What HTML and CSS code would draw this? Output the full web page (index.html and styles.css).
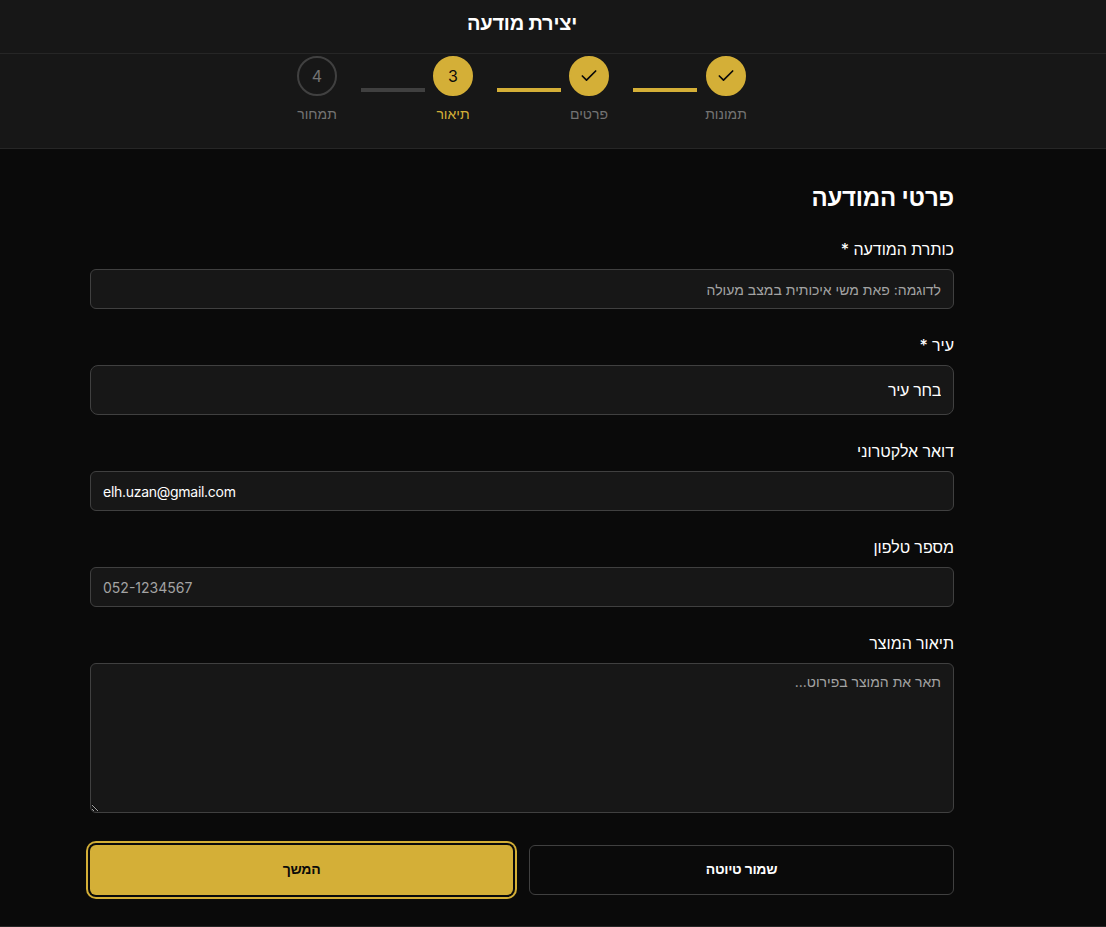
FILE: index.html
```html
<!DOCTYPE html>
<html lang="he" dir="rtl">
<head>
    <meta charset="UTF-8">
    <meta name="viewport" content="width=device-width, initial-scale=1.0">
    <title>יצירת מודעה</title>
    <link rel="stylesheet" href="styles.css">
</head>
<body>
    <div class="wrapper">
        <header class="header">
            <h1 class="header-title">יצירת מודעה</h1>
        </header>
        <nav class="steps">
            <div class="step _done">
                <div class="step-circle">
                    <svg class="step-icon" viewBox="0 0 24 24"><path d="M20 6 9 17l-5-5"/></svg>
                </div>
                <div class="step-label">תמונות</div>
            </div>
            <div class="step-line _done _first"></div>
            <div class="step _done">
                <div class="step-circle">
                    <svg class="step-icon" viewBox="0 0 24 24"><path d="M20 6 9 17l-5-5"/></svg>
                </div>
                <div class="step-label">פרטים</div>
            </div>
            <div class="step-line _done"></div>
            <div class="step _active">
                <div class="step-circle">3</div>
                <div class="step-label">תיאור</div>
            </div>
            <div class="step-line"></div>
            <div class="step">
                <div class="step-circle">4</div>
                <div class="step-label">תמחור</div>
            </div>
        </nav>
        <main class="main">
            <form class="form" action="#">
                <h2 class="form-title">פרטי המודעה</h2>
                <div class="form-item">
                    <label for="formTitle" class="form-label">כותרת המודעה *</label>
                    <input type="text" id="formTitle" class="form-input" placeholder="לדוגמה: פאת משי איכותית במצב מעולה">
                </div>
                <div class="form-item">
                    <label for="formCity" class="form-label">עיר *</label>
                    <select id="formCity" class="form-input form-select">
                        <option>בחר עיר</option>
                    </select>
                </div>
                <div class="form-item">
                    <label for="formEmail" class="form-label">דואר אלקטרוני</label>
                    <input type="email" id="formEmail" class="form-input form-email _ltr" value="elh.uzan@gmail.com">
                </div>
                <div class="form-item">
                    <label for="formPhone" class="form-label">מספר טלפון</label>
                    <input type="tel" id="formPhone" class="form-input _ltr" placeholder="052-1234567">
                </div>
                <div class="form-item">
                    <label for="formDesc" class="form-label">תיאור המוצר</label>
                    <textarea id="formDesc" class="form-input form-textarea" placeholder="תאר את המוצר בפירוט..."></textarea>
                </div>
                <div class="form-buttons">
                    <button class="button button-draft" type="button">שמור טיוטה</button>
                    <button class="button button-next" type="submit">המשך</button>
                </div>
            </form>
        </main>
    </div>
</body>
</html>
```

FILE: styles.css
```css
* {
    box-sizing: border-box;
}
html, body {
    margin: 0;
    height: 100%;
}
body {
    background: #0a0a0a;
    color: #fff;
    font-family: Inter, "Liberation Sans", sans-serif;
}
.wrapper {
    min-height: 927px;
    border-bottom: 1px solid #262626;
}
.header {
    height: 54px;
    padding: 9px 62px 0 0;
    background: #171717;
    border-bottom: 1px solid #262626;
}
.header-title {
    margin: 0;
    font-size: 20px;
    line-height: 28px;
    font-weight: 700;
    letter-spacing: -0.2px;
    text-align: center;
}
.steps {
    display: flex;
    justify-content: center;
    align-items: center;
    height: 95px;
    padding: 2px 63px 24px 0;
    background: #171717;
    border-bottom: 1px solid #262626;
}
.step {
    display: flex;
    flex-direction: column;
    align-items: center;
    width: 40px;
}
.step-circle {
    display: flex;
    justify-content: center;
    align-items: center;
    width: 40px;
    height: 40px;
    border: 2px solid #404040;
    border-radius: 50%;
    font-size: 16px;
    color: #737373;
}
.step._done .step-circle,
.step._active .step-circle {
    background: #d4af37;
    border-color: #d4af37;
    color: #0a0a0a;
}
.step-icon {
    width: 20px;
    height: 20px;
    fill: none;
    stroke: #0a0a0a;
    stroke-width: 2;
    stroke-linecap: round;
    stroke-linejoin: round;
}
.step-label {
    margin-top: 8px;
    font-size: 14px;
    line-height: 20px;
    color: #737373;
    white-space: nowrap;
}
.step._active .step-label {
    color: #d4af37;
}
.step-line {
    width: 64px;
    height: 4px;
    margin-inline: 8px 24px;
    background: #404040;
}
.step-line._first {
    margin-inline-start: 9px;
}
.step-line._done {
    background: #d4af37;
}
.main {
    padding: 33px 152px 0 90px;
}
.form-title {
    margin: 0 0 23px;
    font-size: 24px;
    line-height: 32px;
    font-weight: 700;
    letter-spacing: -0.2px;
}
.form-item {
    margin-bottom: 24px;
}
.form-label {
    display: block;
    margin-bottom: 8px;
    font-size: 16px;
    line-height: 24px;
    font-weight: 500;
}
.form-input {
    display: block;
    width: 100%;
    height: 40px;
    padding: 0 12px;
    background: #171717;
    border: 1px solid #404040;
    border-radius: 6px;
    color: #fff;
    font-family: inherit;
    font-size: 14px;
    outline: none;
}
.form-input::placeholder {
    color: #a3a3a3;
    opacity: 1;
}
.form-input._ltr {
    direction: ltr;
    text-align: left;
}
.form-email {
    letter-spacing: -0.28px;
}
.form-select {
    height: 50px;
    appearance: none;
    border-radius: 8px;
    font-size: 16px;
    letter-spacing: -0.3px;
}
.form-textarea {
    height: 150px;
    padding: 9px 12px;
    resize: vertical;
}
.form-buttons {
    display: flex;
    gap: 16px;
    margin-top: 32px;
}
.button {
    flex: 1;
    height: 50px;
    padding: 0 0 3px;
    border-radius: 6px;
    font-family: inherit;
    font-size: 14px;
    font-weight: 600;
    letter-spacing: -0.3px;
}
.button-draft {
    background: #0a0a0a;
    border: 1px solid #404040;
    color: #fff;
}
.button-next {
    background: #d4af37;
    border: none;
    color: #0a0a0a;
    box-shadow: 0 0 0 2px #0a0a0a, 0 0 0 4px #d4af37;
}
```
